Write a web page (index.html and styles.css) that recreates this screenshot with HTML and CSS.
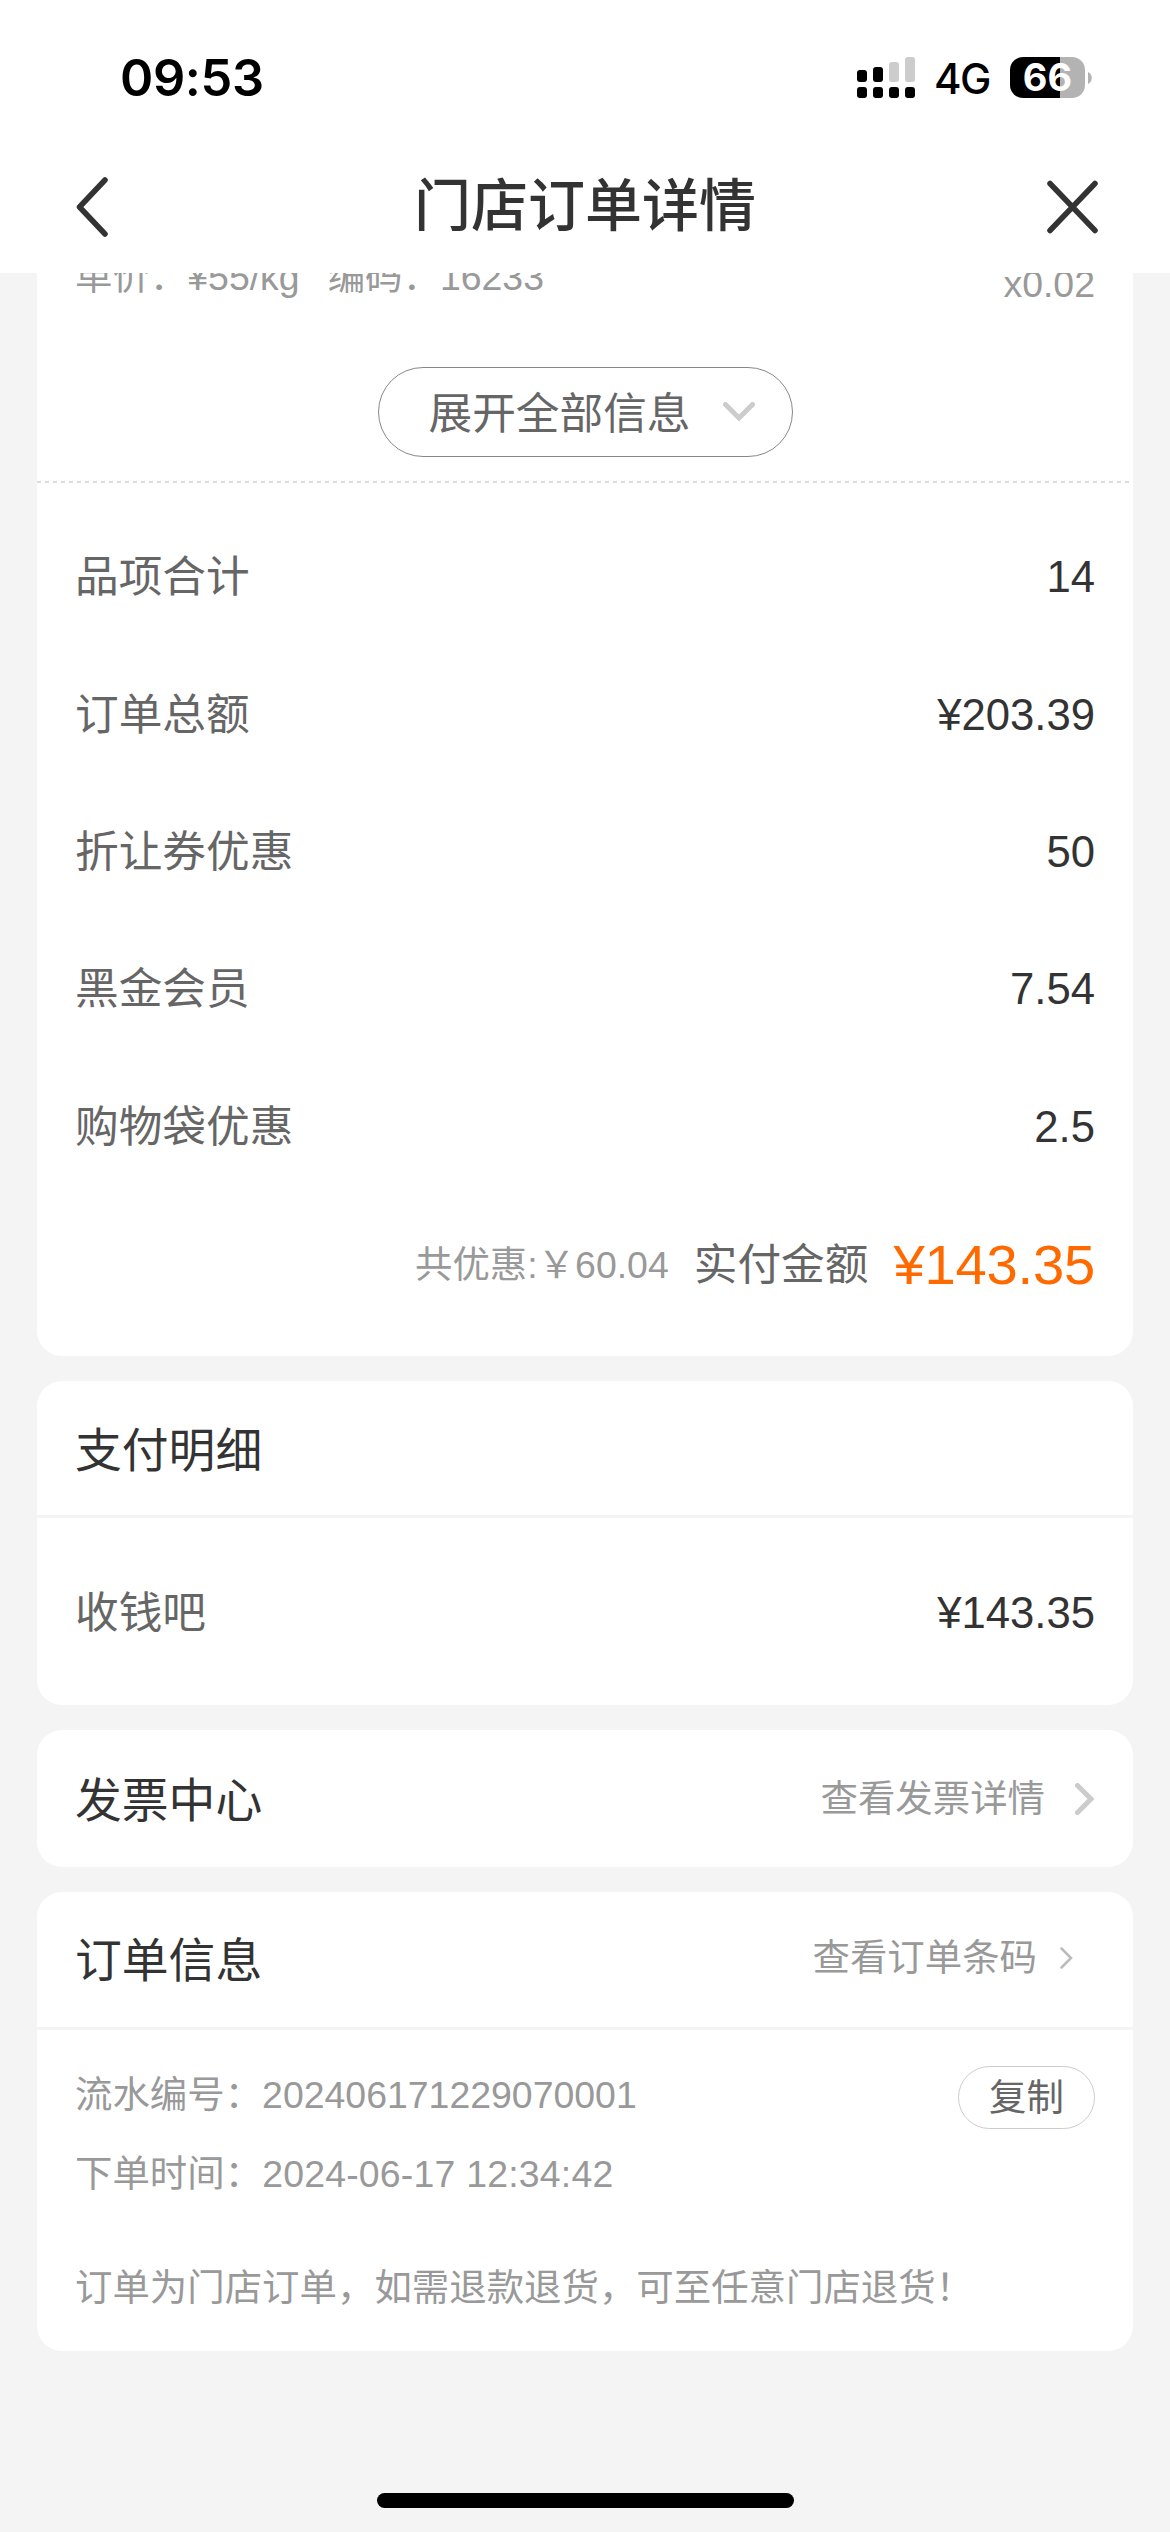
FILE: index.html
```html
<!DOCTYPE html>
<html lang="zh-CN">
<head>
<meta charset="utf-8">
<title>门店订单详情</title>
<link rel="stylesheet" href="styles.css">
</head>
<body>
<div class="screen">
  <header class="top">
    <div class="status">
      <span class="clock">09:53</span>
      <div class="indicators">
        <svg class="signal" width="59" height="42" viewBox="0 0 59 42">
          <g fill="#000">
            <rect x="0" y="13" width="10" height="12" rx="3"/>
            <rect x="16" y="10" width="10" height="15" rx="3"/>
            <rect x="0" y="30" width="10" height="11" rx="3"/>
            <rect x="16" y="30" width="10" height="11" rx="3"/>
            <rect x="32" y="30" width="10" height="11" rx="3"/>
            <rect x="48" y="30" width="10" height="11" rx="3"/>
          </g>
          <g fill="#ccc">
            <rect x="32" y="5" width="10" height="20" rx="3"/>
            <rect x="48" y="0" width="10" height="25" rx="3"/>
          </g>
        </svg>
        <span class="network">4G</span>
        <div class="battery"><span class="level">66</span></div>
        <svg class="nub" width="4" height="12" viewBox="0 0 4 12"><path d="M0 0C5 2 5 10 0 12Z" fill="#b3b3b3"/></svg>
      </div>
    </div>
    <nav class="nav">
      <svg class="icon-nav" width="60" height="60" viewBox="0 0 60 60"><path d="M37 3L11.500 30L37 57"/></svg>
      <h1 class="nav-title">门店订单详情</h1>
      <svg class="icon-nav" width="60" height="60" viewBox="0 0 60 60"><path d="M8 6.500L53 53.500M53 6.500L8 53.500"/></svg>
    </nav>
  </header>

  <main class="content">
    <section class="card card-first">
      <div class="item">
        <div class="item-meta"><span>单价：¥55/kg</span><span>编码：16233</span></div>
        <span class="item-qty">x0.02</span>
      </div>
      <div class="expand-row">
        <button class="expand"><span class="expand-label">展开全部信息</span>
          <svg width="32" height="20" viewBox="0 0 32 20"><path d="M2.500 2.500L16 16L29.500 2.500" fill="none" stroke="#ccc" stroke-width="5" stroke-linecap="round"/></svg>
        </button>
      </div>
      <div class="dashes"></div>
      <div class="sums">
        <div class="row"><span>品项合计</span><span class="value">14</span></div>
        <div class="row"><span>订单总额</span><span class="value">¥203.39</span></div>
        <div class="row"><span>折让券优惠</span><span class="value">50</span></div>
        <div class="row"><span>黑金会员</span><span class="value">7.54</span></div>
        <div class="row"><span>购物袋优惠</span><span class="value">2.5</span></div>
        <div class="row total">
          <span class="saved">共优惠:￥60.04</span>
          <span>实付金额</span>
          <span class="paid">¥143.35</span>
        </div>
      </div>
    </section>

    <section class="card">
      <div class="card-head"><h2>支付明细</h2></div>
      <div class="payment row"><span>收钱吧</span><span class="value">¥143.35</span></div>
    </section>

    <section class="card">
      <div class="card-head invoice"><h2>发票中心</h2>
        <a class="link">查看发票详情
          <svg width="20" height="32" viewBox="0 0 20 32"><path d="M2.500 2.500L16 16L2.500 29.500" fill="none" stroke="#ccc" stroke-width="5" stroke-linecap="round"/></svg>
        </a>
      </div>
    </section>

    <section class="card">
      <div class="card-head order"><h2>订单信息</h2>
        <a class="link link-code">查看订单条码
          <svg width="13" height="22" viewBox="0 0 13 22"><path d="M1.500 1.500L11 11L1.500 20.500" fill="none" stroke="#bbb" stroke-width="2.500" stroke-linecap="round"/></svg>
        </a>
      </div>
      <div class="info">
        <div class="info-line"><span>流水编号：202406171229070001</span><button class="copy">复制</button></div>
        <div class="info-line"><span>下单时间：<span class="date">2024-06-17 12:34:42</span></span></div>
        <p class="note">订单为门店订单，如需退款退货，可至任意门店退货！</p>
      </div>
    </section>
  </main>
  <footer class="home"><div class="home-bar"></div></footer>
</div>
</body>
</html>
```
FILE: styles.css
```css
* { box-sizing: border-box; margin: 0; padding: 0; }

body {
  width: 1170px;
  background: #f4f4f4;
  color: #666;
  font-family: "Liberation Sans", "Noto Sans CJK SC", sans-serif;
  font-size: 43.68px;
  line-height: 1.2;
}

h1, h2 { font-weight: 400; color: #333; }
button { font-family: inherit; color: #666; background: none; }

.screen { height: 2532px; display: flex; flex-direction: column; overflow: hidden; }

/* Status bar and navigation */
.top { height: 273px; flex: none; background: #fff; }
.status {
  height: 156px;
  padding: 0 78px 0 120px;
  display: flex;
  align-items: center;
  justify-content: space-between;
  font-family: Inter, sans-serif;
  color: #000;
}
.clock { font-size: 50.5px; font-weight: 600; letter-spacing: -0.4px; }
.indicators { display: flex; align-items: center; }
.network { margin-left: 18px; width: 76px; padding-top: 2px; font-size: 42px; font-weight: 500; letter-spacing: -1.5px; }
.battery {
  width: 75px;
  height: 41px;
  border-radius: 13px;
  background: linear-gradient(to right, #000 50px, #b3b3b3 50px);
  display: flex;
  align-items: center;
  justify-content: center;
}
.level { color: #fff; font-size: 38px; font-weight: 700; line-height: 41px; }
.nub { margin-left: 3px; }
.nav { height: 102px; padding: 0 68px; display: flex; align-items: center; justify-content: space-between; }
.nav-title { font-size: 57px; font-weight: 500; line-height: 80px; padding-bottom: 2px; }
.icon-nav { fill: none; stroke: #333; stroke-width: 5.5px; stroke-linecap: round; stroke-linejoin: round; }

/* Cards */
.content { flex: 1; padding: 0 37px; display: flex; flex-direction: column; gap: 25px; overflow: hidden; }
.card { background: #fff; border-radius: 25px; flex: none; }
.card-first { border-radius: 0 0 25px 25px; height: 1083px; }

.item {
  height: 94px;
  padding: 0 38px;
  display: flex;
  justify-content: space-between;
  color: #999;
  font-size: 37.44px;
  line-height: 44px;
}
.item-meta { display: flex; gap: 28px; margin-top: -18px; }
.item-qty { margin-top: -11px; }

.expand-row { display: flex; justify-content: center; height: 114px; }
.expand {
  width: 415px;
  height: 90px;
  border: 1.5px solid #888;
  border-radius: 45px;
  font-size: 43.68px;
  display: flex;
  align-items: center;
  justify-content: center;
  gap: 32px;
  padding-left: 13px;
}
.expand-label { padding-bottom: 4px; }
.dashes { height: 2px; background: repeating-linear-gradient(to right, #dcdcdc 0 4px, transparent 4px 8px); }

.sums { padding-top: 26px; }
.row { height: 137.3px; padding: 0 38px; display: flex; align-items: center; justify-content: space-between; }
.value { color: #333; }
.total { justify-content: flex-end; gap: 25px; padding-top: 2px; }
.saved { color: #999; font-size: 37.44px; }
.paid { color: #ff6a00; font-size: 56.16px; letter-spacing: -0.2px; }

.card-head { height: 137px; padding: 0 38px; border-bottom: 3px solid #f4f4f4; display: flex; align-items: center; justify-content: space-between; }
.card-head h2 { font-size: 46.8px; padding-top: 6px; }
.card-head.invoice { border-bottom: 0; }
.payment { height: 187px; padding-top: 3px; }
.card-head.order { height: 138px; }
.card-head.order h2 { padding-top: 4px; }
.link { color: #999; font-size: 37.44px; display: flex; align-items: center; gap: 30px; padding-top: 1px; }
.link-code { gap: 23px; padding-right: 22px; margin-top: -4px; }

/* Order information */
.info { padding: 36px 38px 0; height: 321px; color: #999; font-size: 37.44px; }
.info-line { height: 78.5px; display: flex; align-items: flex-start; justify-content: space-between; line-height: 58px; }
.date { letter-spacing: 0.2px; }
.copy { width: 137px; height: 63px; border: 1.5px solid #ccc; border-radius: 32px; font-size: 37.44px; line-height: 60px; }
.note { padding-top: 36px; line-height: 58px; white-space: nowrap; }

.home { height: 39px; flex: none; display: flex; justify-content: center; }
.home-bar { width: 417px; height: 15px; border-radius: 8px; background: #000; }
```
